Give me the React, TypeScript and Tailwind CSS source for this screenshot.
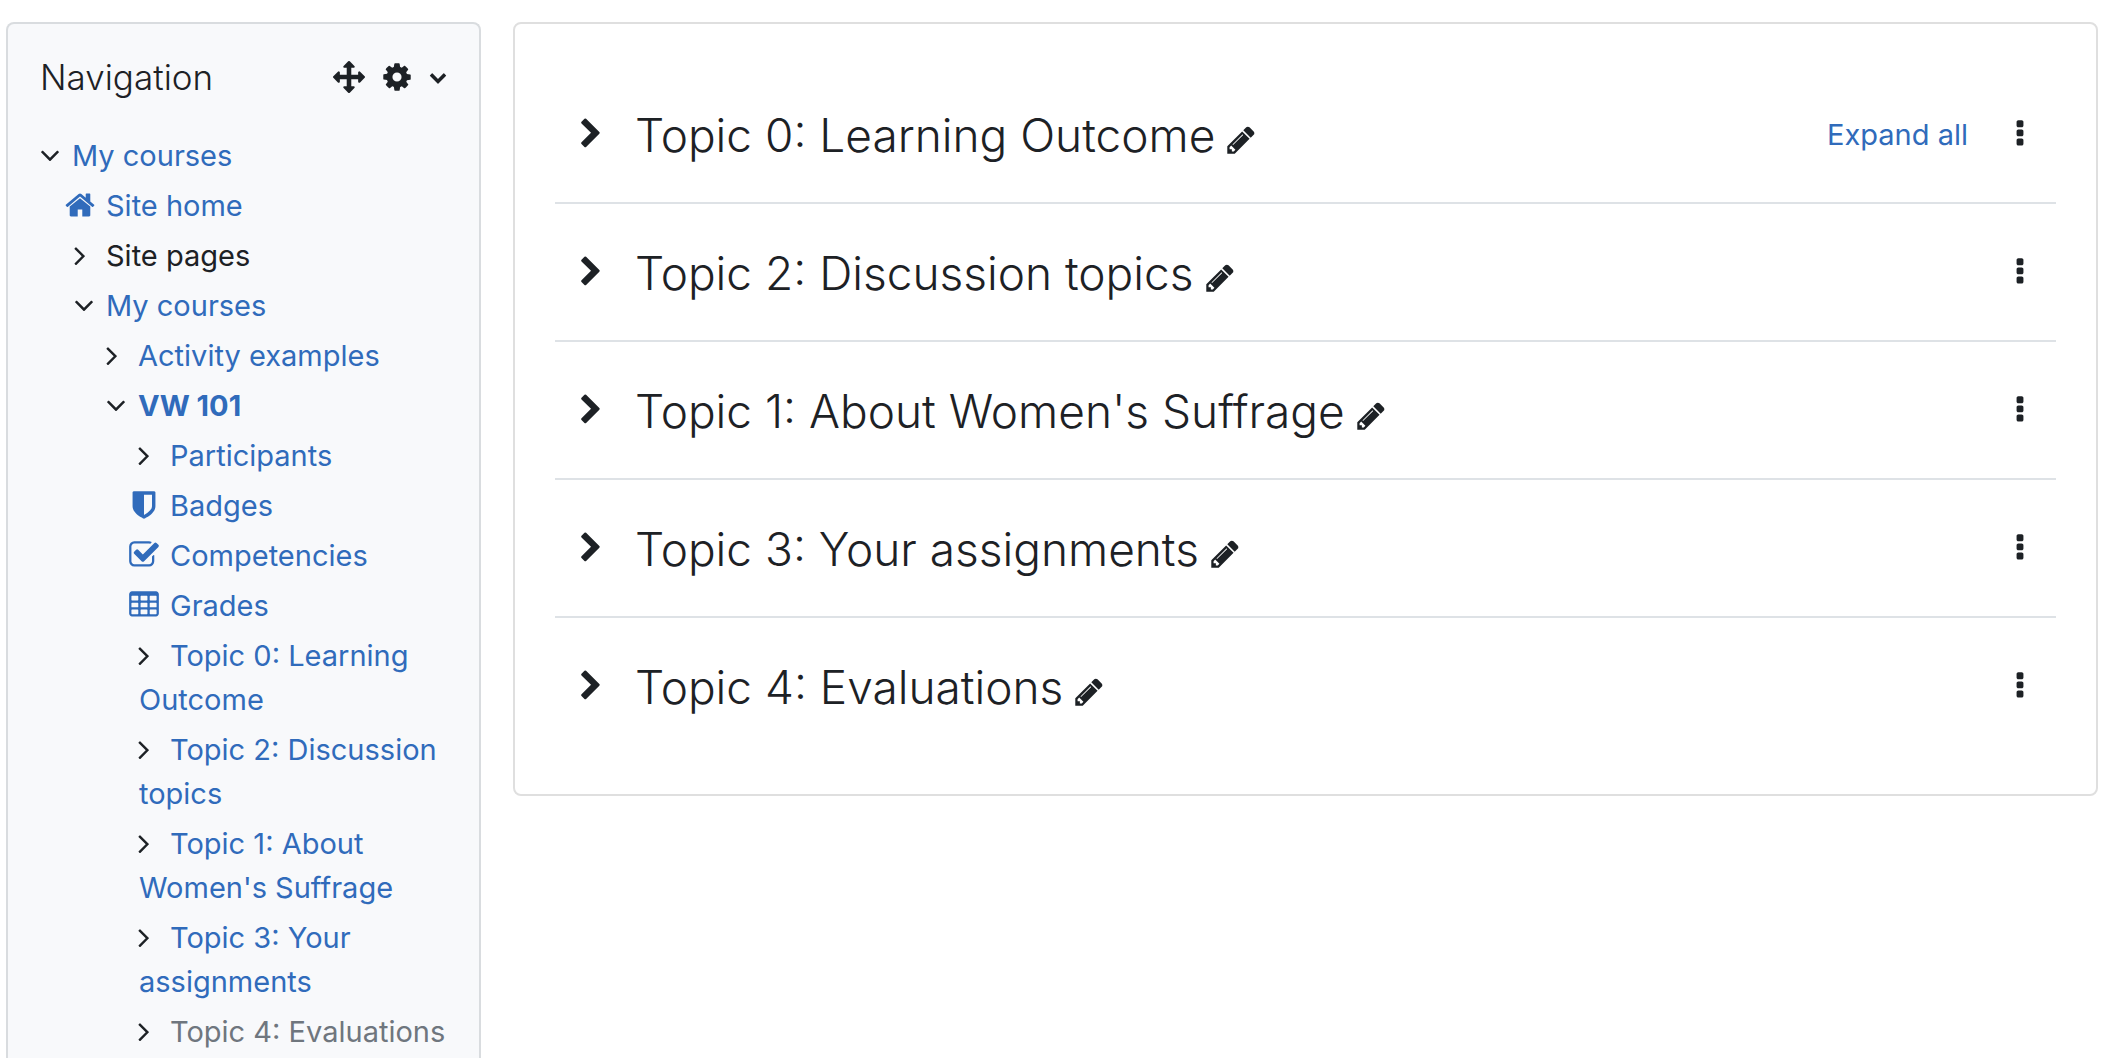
import type { ReactNode } from 'react';

const paths = {
  arrows:
    'M1792 896q0 26-19 45l-256 256q-19 19-45 19t-45-19-19-45v-128h-384v384h128q26 0 45 19t19 45-19 45l-256 256q-19 19-45 19t-45-19l-256-256q-19-19-19-45t19-45 45-19h128v-384h-384v128q0 26-19 45t-45 19-45-19l-256-256q-19-19-19-45t19-45l256-256q19-19 45-19t45 19 19 45v128h384v-384h-128q-26 0-45-19t-19-45 19-45l256-256q19-19 45-19t45 19l256 256q19 19 19 45t-19 45-45 19h-128v384h384v-128q0-26 19-45t45-19 45 19l256 256q19 19 19 45z',
  cog:
    'M1152 896q0-106-75-181t-181-75-181 75-75 181 75 181 181 75 181-75 75-181zm512-109v222q0 12-8 23t-20 13l-185 28q-19 54-39 91 35 50 107 138 10 12 10 25t-9 23q-27 37-99 108t-94 71q-12 0-26-9l-138-108q-44 23-91 38-16 136-29 186-7 28-36 28h-222q-14 0-24.5-8.5t-11.5-21.5l-28-184q-49-16-90-37l-141 107q-10 9-25 9-14 0-25-11-126-114-165-168-7-10-7-23 0-12 8-23 15-21 51-66.5t54-70.5q-27-50-41-99l-183-27q-13-2-21-12.5t-8-23.5v-222q0-12 8-23t19-13l186-28q14-46 39-92-40-57-107-138-10-12-10-24 0-10 9-23 26-36 98.5-107.5t94.5-71.5q13 0 26 10l138 107q44-23 91-38 16-136 29-186 7-28 36-28h222q14 0 24.5 8.5t11.5 21.5l28 184q49 16 90 37l142-107q9-9 24-9 13 0 25 10 129 119 165 170 7 8 7 22 0 12-8 23-15 21-51 66.5t-54 70.5q26 50 41 98l183 28q13 2 21 12.5t8 23.5z',
  home:
    'M1472 992v480q0 26-19 45t-45 19h-384v-384h-256v384h-384q-26 0-45-19t-19-45v-480q0-1 .5-3t.5-3l575-474 575 474q1 2 1 6zm223-69l-62 74q-8 9-21 11h-3q-13 0-21-7l-692-577-692 577q-12 8-24 7-13-2-21-11l-62-74q-8-10-7-23.5t11-21.5l719-599q32-26 76-26t76 26l244 204v-195q0-14 9-23t23-9h192q14 0 23 9t9 23v408l219 182q10 8 11 21.5t-7 23.5z',
  pencil:
    'M491 1536l91-91-235-235-91 91v107h128v128h107zm523-928q0-22-22-22-10 0-17 7l-542 542q-7 7-7 17 0 22 22 22 10 0 17-7l542-542q7-7 7-17zm-54-192l416 416-832 832h-416v-416zm683 96q0 53-37 90l-166 166-416-416 166-165q36-38 90-38 53 0 91 38l235 234q37 39 37 91z',
  shield:
    'M1344 960v-640h-448v1137q119-63 213-137 235-184 235-360zm192-768v768q0 86-33.5 170.5t-83 150-118 127.5-126.5 103-121 77.5-89.5 49.5-42.5 20q-12 6-26 6t-26-6q-16-7-42.5-20t-89.5-49.5-121-77.5-126.5-103-118-127.5-83-150-33.5-170.5v-768q0-26 19-45t45-19h1152q26 0 45 19t19 45z',
  check:
    'M1472 930v318q0 119-84.5 203.5t-203.5 84.5h-832q-119 0-203.5-84.5t-84.5-203.5v-832q0-119 84.5-203.5t203.5-84.5h832q63 0 117 25 15 7 18 23 3 17-9 29l-49 49q-10 10-23 10-3 0-9-2-23-6-45-6h-832q-66 0-113 47t-47 113v832q0 66 47 113t113 47h832q66 0 113-47t47-113v-254q0-13 9-22l64-64q10-10 23-10 6 0 12 3 20 8 20 29zm231-489l-814 814q-24 24-57 24t-57-24l-430-430q-24-24-24-57t24-57l110-110q24-24 57-24t57 24l263 263 647-647q24-24 57-24t57 24l110 110q24 24 24 57t-24 57z',
  table:
    'M576 1376v-192q0-14-9-23t-23-9h-320q-14 0-23 9t-9 23v192q0 14 9 23t23 9h320q14 0 23-9t9-23zm0-384v-192q0-14-9-23t-23-9h-320q-14 0-23 9t-9 23v192q0 14 9 23t23 9h320q14 0 23-9t9-23zm512 384v-192q0-14-9-23t-23-9h-320q-14 0-23 9t-9 23v192q0 14 9 23t23 9h320q14 0 23-9t9-23zm-512-768v-192q0-14-9-23t-23-9h-320q-14 0-23 9t-9 23v192q0 14 9 23t23 9h320q14 0 23-9t9-23zm512 384v-192q0-14-9-23t-23-9h-320q-14 0-23 9t-9 23v192q0 14 9 23t23 9h320q14 0 23-9t9-23zm512 384v-192q0-14-9-23t-23-9h-320q-14 0-23 9t-9 23v192q0 14 9 23t23 9h320q14 0 23-9t9-23zm-512-768v-192q0-14-9-23t-23-9h-320q-14 0-23 9t-9 23v192q0 14 9 23t23 9h320q14 0 23-9t9-23zm512 384v-192q0-14-9-23t-23-9h-320q-14 0-23 9t-9 23v192q0 14 9 23t23 9h320q14 0 23-9t9-23zm0-384v-192q0-14-9-23t-23-9h-320q-14 0-23 9t-9 23v192q0 14 9 23t23 9h320q14 0 23-9t9-23zm128-320v1088q0 66-47 113t-113 47h-1344q-66 0-113-47t-47-113v-1088q0-66 47-113t113-47h1344q66 0 113 47t47 113z',
  chevronRight:
    'M1363 877l-742 742q-19 19-45 19t-45-19l-166-166q-19-19-19-45t19-45l531-531-531-531q-19-19-19-45t19-45l166-166q19-19 45-19t45 19l742 742q19 19 19 45t-19 45z',
  chevronDown:
    'M1683 808l-742 741q-19 19-45 19t-45-19l-742-741q-19-19-19-45.5t19-45.5l166-165q19-19 45-19t45 19l531 531 531-531q19-19 45-19t45 19l166 165q19 19 19 45.5t-19 45.5z',
  right:
    'M1171 960q0 13-10 23l-466 466q-10 10-23 10t-23-10l-50-50q-10-10-10-23t10-23l393-393-393-393q-10-10-10-23t10-23l50-50q10-10 23-10t23 10l466 466q10 10 10 23z',
  down:
    'M1395 736q0 13-10 23l-466 466q-10 10-23 10t-23-10l-466-466q-10-10-10-23t10-23l50-50q10-10 23-10t23 10l393 393 393-393q10-10 23-10t23 10l50 50q10 10 10 23z',
  dots:
    'M1088 1248v192q0 40-28 68t-68 28h-192q-40 0-68-28t-28-68v-192q0-40 28-68t68-28h192q40 0 68 28t28 68zm0-512v192q0 40-28 68t-68 28h-192q-40 0-68-28t-28-68v-192q0-40 28-68t68-28h192q40 0 68 28t28 68zm0-512v192q0 40-28 68t-68 28h-192q-40 0-68-28t-28-68v-192q0-40 28-68t68-28h192q40 0 68 28t28 68z',
};

type IconName = keyof typeof paths;

const Icon = ({ name, className }: { name: IconName; className: string }) => (
  <svg viewBox="0 0 1792 1792" fill="currentColor" aria-hidden="true" className={className}>
    <path d={paths[name]} />
  </svg>
);

type ItemProps = {
  icon: IconName;
  label: string;
  style?: string;
  plain?: boolean;
  children?: ReactNode;
};

const link = 'text-[#306bbb]';

const Item = ({ icon, label, style = link, plain, children }: ItemProps) => {
  const arrow = icon === 'right' || icon === 'down';
  const iconClass = `inline-block size-8 align-[-5px] ${icon === 'down' ? '-ml-[7px] mr-[6px]' : '-ml-[11px] mr-[10px]'}`;
  return (
    <li>
      <div className="mb-1.5">
        {arrow && (
          <button type="button" aria-label={`Toggle ${label}`} className="inline">
            <Icon name={icon} className={iconClass} />
          </button>
        )}
        {plain ? (
          <span>{label}</span>
        ) : (
          <a href="#" className={style}>
            {!arrow && <Icon name={icon} className={iconClass} />}
            {label}
          </a>
        )}
      </div>
      {children}
    </li>
  );
};

const topics = [
  'Topic 0: Learning Outcome',
  'Topic 2: Discussion topics',
  "Topic 1: About Women's Suffrage",
  'Topic 3: Your assignments',
  'Topic 4: Evaluations',
];

const Navigation = () => {
  return (
    <aside className="w-[475px] shrink-0 rounded-t-lg border-2 border-b-0 border-[#d9dcdf] bg-[#f8f9fb] pt-[31px] pr-8 pl-8">
      <div className="flex items-center justify-between">
        <h2 className="text-[35px] leading-[44px] font-light">Navigation</h2>
        <div className="flex items-center gap-4">
          <button type="button" aria-label="Move Navigation block">
            <Icon name="arrows" className="size-8" />
          </button>
          <button type="button" aria-label="Actions menu" className="flex items-center gap-4">
            <Icon name="cog" className="size-8" />
            <Icon name="chevronDown" className="size-[18px]" />
          </button>
        </div>
      </div>
      <nav className="mt-[35px] pl-px text-[29px] leading-[44px]">
        <ul>
          <Item icon="down" label="My courses">
            <ul className="pl-[34px]">
              <Item icon="home" label="Site home" />
              <Item icon="right" label="Site pages" plain />
              <Item icon="down" label="My courses">
                <ul className="pl-8">
                  <Item icon="right" label="Activity examples" />
                  <Item icon="down" label="VW 101" style="font-bold text-[#306bbb]">
                    <ul className="pl-8">
                      <Item icon="right" label="Participants" />
                      <Item icon="shield" label="Badges" />
                      <Item icon="check" label="Competencies" />
                      <Item icon="table" label="Grades" />
                      {topics.map((topic, i) => (
                        <Item
                          key={topic}
                          icon="right"
                          label={topic}
                          style={i === 4 ? 'text-[#6f767e]' : link}
                        />
                      ))}
                    </ul>
                  </Item>
                </ul>
              </Item>
            </ul>
          </Item>
        </ul>
      </nav>
    </aside>
  );
};

const Course = () => {
  return (
    <main className="min-w-0 flex-1 self-start rounded-lg border-2 border-[#dfdfdf] px-10 pt-[42px] pb-10">
      {topics.map((topic, i) => (
        <section
          key={topic}
          className="flex h-[138px] items-center border-b-2 border-[#dee2e6] px-5 last:h-[136px] last:border-b-0"
        >
          <button type="button" aria-label={`Expand ${topic}`}>
            <Icon name="chevronRight" className="size-8" />
          </button>
          <h3 className="ml-7 pt-0.5 text-[46px] font-light">{topic}</h3>
          <button type="button" aria-label={`Edit ${topic}`} className="mt-3 ml-2.5">
            <Icon name="pencil" className="size-8" />
          </button>
          <div className="ml-auto flex items-center">
            {i === 0 && (
              <a href="#" className="mr-9 pt-0.5 text-[29px] text-[#306bbb]">
                Expand all
              </a>
            )}
            <button type="button" aria-label={`Actions for ${topic}`}>
              <Icon name="dots" className="size-8" />
            </button>
          </div>
        </section>
      ))}
    </main>
  );
};

const App = () => {
  return (
    <div className="flex min-h-screen gap-8 bg-white pt-[22px] pr-3 pl-1.5 font-['Inter','Liberation_Sans',sans-serif] text-[#1d2125]">
      <Navigation />
      <Course />
    </div>
  );
};

export default App;
